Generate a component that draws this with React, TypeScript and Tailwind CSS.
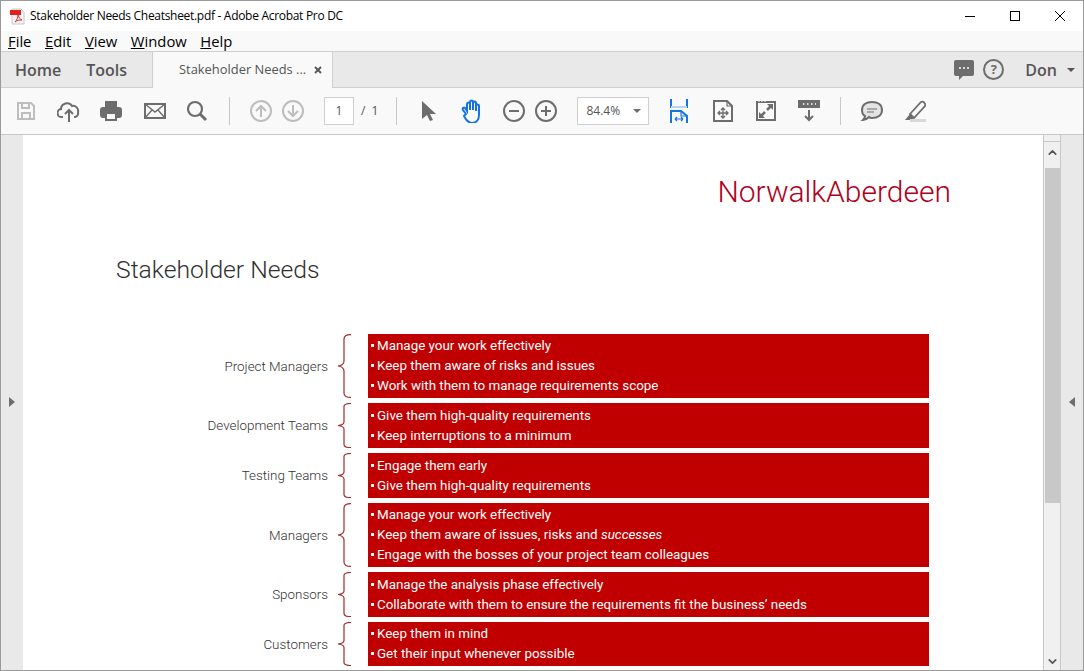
import { ChevronUp, ChevronDown } from 'lucide-react';

const stakeholders = [
  { name: 'Project Managers', h: 'h-[64px]', lines: ['Manage your work effectively', 'Keep them aware of risks and issues', 'Work with them to manage requirements scope'] },
  { name: 'Development Teams', h: 'h-[45px]', lines: ['Give them high-quality requirements', 'Keep interruptions to a minimum'] },
  { name: 'Testing Teams', h: 'h-[45px]', lines: ['Engage them early', 'Give them high-quality requirements'] },
  { name: 'Managers', h: 'h-[64px]', lines: ['Manage your work effectively', 'Keep them aware of issues, risks and #successes', 'Engage with the bosses of your project team colleagues'] },
  { name: 'Sponsors', h: 'h-[45px]', lines: ['Manage the analysis phase effectively', 'Collaborate with them to ensure the requirements fit the business’ needs'] },
  { name: 'Customers', h: 'h-[44px]', lines: ['Keep them in mind', 'Get their input whenever possible'] },
];

function Brace() {
  return (
    <svg viewBox="0 0 14 100" preserveAspectRatio="none" className="h-full w-[14px] shrink-0" fill="none" stroke="#a02c2c">
      <path vectorEffect="non-scaling-stroke" strokeWidth="1.2" d="M14 1 C9 1 7 3 7 8 L7 42 C7 47 5 49 1 50 C5 51 7 53 7 58 L7 92 C7 97 9 99 14 99" />
    </svg>
  );
}

function Row({ name, h, lines }: { name: string; h: string; lines: string[] }) {
  return (
    <div className={`flex ${h} items-stretch`}>
      <div className="flex w-[198px] items-center justify-end pt-[2px] text-[13.4px] text-[#333]">{name}</div>
      <div className="ml-[9px] mr-[17px] flex">
        <Brace />
      </div>
      <div className="flex w-[561px] flex-col justify-center bg-[#c00000] pl-[3px] text-[13.4px] font-normal leading-[20px] text-white">
        {lines.map((l) => {
          const [a, b] = l.split('#');
          return (
            <div key={l} className="whitespace-nowrap">
              <span className="mr-[3px] inline-block h-[3px] w-[3px] translate-y-[-3px] bg-white"></span>
              {a}
              {b && <i>{b}</i>}
            </div>
          );
        })}
      </div>
    </div>
  );
}

function ToolIcon({ ml, w = 24, children, color = '#6d6d6d' }: { ml: number; w?: number; children: React.ReactNode; color?: string }) {
  return (
    <svg width={w} height="24" viewBox={`0 0 ${w} 24`} fill="none" stroke={color} strokeWidth="2" style={{ marginLeft: ml }} className="shrink-0">
      {children}
    </svg>
  );
}

export default function App() {
  return (
    <div className="flex h-[671px] w-[1084px] flex-col overflow-hidden border border-[#9a9a9a] bg-white font-['Roboto',sans-serif] text-[#1a1a1a]">
      <div className="flex h-[30px] shrink-0 items-center bg-white">
        <svg width="17" height="17" viewBox="0 0 17 17" className="ml-[8px] shrink-0">
          <path d="M3 1h9l3 3v12H3z" fill="#f4f4f4" stroke="#c8c8c8" />
          <rect x="1" y="2" width="11" height="5" fill="#e0201c" />
          <path d="M6 14c2-2 3-5 3-7 1 3 2 4 4 5-2 0-5 0-7 2z" fill="none" stroke="#d8302c" />
        </svg>
        <span className="ml-[4px] font-['Open_Sans',sans-serif] text-[12px] tracking-[-0.3px] text-black">Stakeholder Needs Cheatsheet.pdf - Adobe Acrobat Pro DC</span>
        <div className="ml-auto flex items-center">
          <div className="h-[1px] w-[10px] bg-black"></div>
          <div className="ml-[35px] h-[10px] w-[10px] border border-black"></div>
          <svg width="12" height="12" viewBox="0 0 12 12" className="ml-[34px] mr-[17px]" stroke="black">
            <path d="M1 1l10 10M11 1L1 11" />
          </svg>
        </div>
      </div>
      <div className="flex h-[20px] shrink-0 items-center gap-[13.6px] bg-[#f9f9f9] pl-[7px] font-['Open_Sans',sans-serif] text-[14.8px] text-black">
        <span><u>F</u>ile</span>
        <span><u>E</u>dit</span>
        <span><u>V</u>iew</span>
        <span><u>W</u>indow</span>
        <span><u>H</u>elp</span>
      </div>
      <div className="flex h-[37px] shrink-0 items-stretch border-y border-[#cfcfcf] bg-[#e9e9e9]">
        <div className="flex w-[151px] items-center gap-[25px] pl-[14px] font-['Open_Sans',sans-serif] text-[16px] font-semibold text-[#555]">
          <span>Home</span>
          <span>Tools</span>
        </div>
        <div className="-mb-[1px] flex w-[181px] items-center border-x border-[#cfcfcf] bg-[#f9f9f9] pl-[26px] font-['Open_Sans',sans-serif] text-[12.9px] text-[#555]">
          <span className="whitespace-nowrap">Stakeholder Needs ...</span>
          <svg width="8" height="8" viewBox="0 0 8 8" className="ml-[8px]" stroke="#555" strokeWidth="1.8">
            <path d="M1 1l6 6M7 1L1 7" />
          </svg>
        </div>
        <div className="ml-auto flex items-center pr-[8px]">
          <svg width="22" height="22" viewBox="0 0 22 22">
            <path d="M3 1h16a2 2 0 012 2v12a2 2 0 01-2 2H10l-4 4v-4H3a2 2 0 01-2-2V3a2 2 0 012-2z" fill="#6d6d6d" />
            <circle cx="7" cy="9" r="1" fill="#fff" />
            <circle cx="11" cy="9" r="1" fill="#fff" />
            <circle cx="15" cy="9" r="1" fill="#fff" />
          </svg>
          <div className="ml-[8px] flex h-[21px] w-[21px] items-center justify-center rounded-full border-2 border-[#6d6d6d] font-['Open_Sans',sans-serif] text-[13px] font-bold text-[#6d6d6d]">?</div>
          <span className="ml-[21px] font-['Open_Sans',sans-serif] text-[16px] font-semibold text-[#555]">Don</span>
          <div className="ml-[10px] h-0 w-0 border-x-[4px] border-t-[4px] border-x-transparent border-t-[#555]"></div>
        </div>
      </div>
      <div className="flex h-[47px] shrink-0 items-center border-b border-[#c8c8c8] bg-[#f9f9f9] font-['Open_Sans',sans-serif]">
        <ToolIcon ml={13} color="#bdbdbd">
          <path d="M4 4h13l3 3v13H4z" />
          <path d="M8 4v5h7V4M8 20v-6h8v6" />
        </ToolIcon>
        <ToolIcon ml={19}>
          <path d="M6 18H5a4 4 0 01-1-8 6 6 0 0111-3 5 5 0 016 6 4 4 0 01-3 5h-1" />
          <path d="M12 23V11M8 15l4-4 4 4" />
        </ToolIcon>
        <ToolIcon ml={18}>
          <rect x="2" y="9" width="20" height="9" rx="2" fill="#6d6d6d" />
          <rect x="6" y="2" width="12" height="6" fill="#6d6d6d" stroke="none" />
          <rect x="7" y="14" width="10" height="7" fill="#f9f9f9" />
        </ToolIcon>
        <ToolIcon ml={20}>
          <rect x="2" y="5" width="20" height="14" />
          <path d="M2 5l10 8 10-8M2 19l7-8M22 19l-7-8" strokeWidth="1.4" />
        </ToolIcon>
        <ToolIcon ml={18}>
          <circle cx="10" cy="10" r="7" strokeWidth="2.2" />
          <path d="M15 15l6 6" strokeWidth="3" />
        </ToolIcon>
        <div className="ml-[20px] h-[28px] w-[1px] bg-[#c8c8c8]"></div>
        <ToolIcon ml={19} color="#bdbdbd">
          <circle cx="12" cy="12" r="10" />
          <path d="M12 18V7M7 12l5-5 5 5" />
        </ToolIcon>
        <ToolIcon ml={8} color="#bdbdbd">
          <circle cx="12" cy="12" r="10" />
          <path d="M12 6v11M7 12l5 5 5-5" />
        </ToolIcon>
        <div className="ml-[19px] flex h-[28px] w-[30px] items-center justify-center border border-[#cfcfcf] bg-white text-[12px] text-[#555]">1</div>
        <span className="ml-[7px] text-[12px] text-[#555]">/ <span className="ml-[3px]">1</span></span>
        <div className="ml-[18px] h-[28px] w-[1px] bg-[#c8c8c8]"></div>
        <ToolIcon ml={20}>
          <path d="M5 2v18l5-4 3 6 3-1-3-6h6z" fill="#6d6d6d" stroke="none" />
        </ToolIcon>
        <ToolIcon ml={19} color="#1473e6">
          <path d="M6 15l-3-4c-1-2 1-3 2-2l2 3V5c0-2 2.500-2 3 0v6-8c0-2 3-2 3 0v8-7c0-2 3-2 3 0v8-5c0-2 3-2 3 0v9c0 5-3 8-7 8s-6-3-8-7z" />
        </ToolIcon>
        <ToolIcon ml={18}>
          <circle cx="12" cy="12" r="10" />
          <path d="M7 12h10" />
        </ToolIcon>
        <ToolIcon ml={8}>
          <circle cx="12" cy="12" r="10" />
          <path d="M7 12h10M12 7v10" />
        </ToolIcon>
        <div className="ml-[19px] flex h-[28px] w-[72px] items-center border border-[#cfcfcf] bg-white pl-[8px] text-[12px] text-[#555]">
          84.4%
          <div className="ml-auto mr-[7px] h-0 w-0 border-x-[4px] border-t-[4px] border-x-transparent border-t-[#6d6d6d]"></div>
        </div>
        <ToolIcon ml={18} color="#1473e6">
          <path d="M4 0v8h16V0" />
          <path d="M4 8h16" stroke="#b8d4f4" />
          <path d="M4 24V12h10l6 5v7" />
          <path d="M14 12v5h6" strokeWidth="1.2" />
          <path d="M8 20h8M8 20l2-2M8 20l2 2M16 20l-2-2M16 20l-2 2" strokeWidth="1.2" />
        </ToolIcon>
        <ToolIcon ml={20}>
          <path d="M3 2h13l5 5v15H3z" />
          <path d="M16 2v5h5" strokeWidth="1.2" />
          <path d="M12 9v10M7 14h10M10 11l2-2 2 2M10 17l2 2 2-2M9 12l-2 2 2 2M15 12l2 2-2 2" strokeWidth="1.3" />
        </ToolIcon>
        <ToolIcon ml={19}>
          <rect x="3" y="3" width="18" height="18" />
          <path d="M4 2h8" stroke="#f9f9f9" strokeDasharray="2 1" strokeWidth="1" />
          <path d="M13 11l4-4" strokeWidth="2.5" />
          <path d="M13 5h6v6z" fill="#6d6d6d" stroke="none" />
          <path d="M11 13l-4 4" strokeWidth="2.5" />
          <path d="M5 13v6h6z" fill="#6d6d6d" stroke="none" />
        </ToolIcon>
        <ToolIcon ml={19}>
          <rect x="2" y="2" width="20" height="6" fill="#6d6d6d" stroke="#6d6d6d" />
          <path d="M6 5h1.500M10 5h1.500M14 5h1.500M18 5h1" stroke="#fff" strokeWidth="1.6" />
          <path d="M12 11v10M8 17l4 4 4-4" />
        </ToolIcon>
        <div className="ml-[19px] h-[28px] w-[1px] bg-[#c8c8c8]"></div>
        <ToolIcon ml={19}>
          <path d="M12 3c6 0 10 3 10 8s-4 8-10 8c-1 0-2 0-3-1-1 1-3 3-6 3 1-1 2-3 2-4-2-1-3-3-3-6 0-5 4-8 10-8z" fill="#e4e4e4" />
          <path d="M7 10h10M7 13h7" strokeWidth="1.2" />
        </ToolIcon>
        <ToolIcon ml={19}>
          <path d="M7 15L18 3c2-1 5 1 4 4L11 19z" strokeWidth="1.8" />
          <path d="M7 15l4 4-3 2H2z" fill="#6d6d6d" stroke="none" />
          <rect x="7" y="20" width="16" height="3" fill="#d9d9d9" stroke="none" />
        </ToolIcon>
      </div>
      <div className="flex min-h-0 flex-1">
        <div className="flex w-[22px] shrink-0 items-center justify-center bg-[#e9e9e9]">
          <div className="h-0 w-0 translate-y-[-1px] border-y-[5px] border-l-[6px] border-y-transparent border-l-[#6d6d6d]"></div>
        </div>
        <div className="w-[1020px] shrink-0 overflow-hidden bg-white pt-[37px] font-['Roboto',sans-serif] font-light">
          <div className="pr-[92px] text-right text-[30px] leading-[40px] text-[#b00020]">NorwalkAberdeen</div>
          <div className="mt-[40px] pl-[93px] text-[24.7px] leading-[36px] text-[#303030]">Stakeholder Needs</div>
          <div className="mt-[46px] flex flex-col gap-[5px] pl-[107px]">
            {stakeholders.map((s) => (
              <Row key={s.name} name={s.name} h={s.h} lines={s.lines} />
            ))}
          </div>
        </div>
        <div className="flex w-[18px] shrink-0 flex-col items-center border-x border-[#c8c8c8] bg-[#f0f0f0]">
          <div className="h-[7px] w-full border-b border-[#c8c8c8]"></div>
          <ChevronUp size={13} strokeWidth={3} color="#555" className="mt-[4px]" />
          <div className="mt-[9px] h-[335px] w-[15px] bg-[#c8c8c8]"></div>
          <ChevronDown size={13} strokeWidth={3} color="#555" className="mt-auto mb-[2px]" />
        </div>
        <div className="flex flex-1 items-center justify-center bg-[#e9e9e9]">
          <div className="h-0 w-0 translate-y-[-1px] border-y-[5px] border-r-[6px] border-y-transparent border-r-[#6d6d6d]"></div>
        </div>
      </div>
    </div>
  );
}
